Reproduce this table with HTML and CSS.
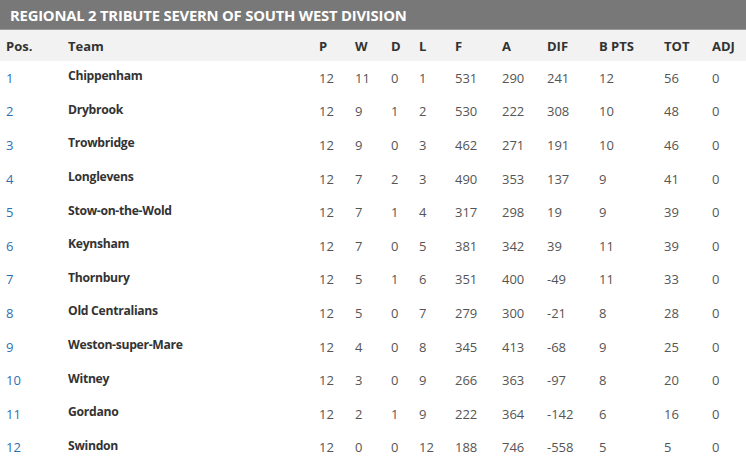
FILE: index.html
```html
<!DOCTYPE html>
<html>
<head>
<meta charset="utf-8">
<link rel="stylesheet" href="styles.css">
</head>
<body>
<div class="league">
  <div class="title">REGIONAL 2 TRIBUTE SEVERN OF SOUTH WEST DIVISION</div>
  <table class="standings">
    <colgroup>
      <col class="c-pos"><col class="c-team"><col class="c-p"><col class="c-w"><col class="c-d"><col class="c-l"><col class="c-f"><col class="c-a"><col class="c-dif"><col class="c-b"><col class="c-tot"><col class="c-adj">
    </colgroup>
    <thead>
      <tr><th>Pos.</th><th>Team</th><th>P</th><th>W</th><th>D</th><th>L</th><th>F</th><th>A</th><th>DIF</th><th>B PTS</th><th>TOT</th><th>ADJ</th></tr>
    </thead>
    <tbody>
      <tr><td class="pos">1</td><td class="team">Chippenham</td><td>12</td><td>11</td><td>0</td><td>1</td><td>531</td><td>290</td><td>241</td><td>12</td><td>56</td><td>0</td></tr>
      <tr><td class="pos">2</td><td class="team">Drybrook</td><td>12</td><td>9</td><td>1</td><td>2</td><td>530</td><td>222</td><td>308</td><td>10</td><td>48</td><td>0</td></tr>
      <tr><td class="pos">3</td><td class="team">Trowbridge</td><td>12</td><td>9</td><td>0</td><td>3</td><td>462</td><td>271</td><td>191</td><td>10</td><td>46</td><td>0</td></tr>
      <tr><td class="pos">4</td><td class="team">Longlevens</td><td>12</td><td>7</td><td>2</td><td>3</td><td>490</td><td>353</td><td>137</td><td>9</td><td>41</td><td>0</td></tr>
      <tr><td class="pos">5</td><td class="team">Stow-on-the-Wold</td><td>12</td><td>7</td><td>1</td><td>4</td><td>317</td><td>298</td><td>19</td><td>9</td><td>39</td><td>0</td></tr>
      <tr><td class="pos">6</td><td class="team">Keynsham</td><td>12</td><td>7</td><td>0</td><td>5</td><td>381</td><td>342</td><td>39</td><td>11</td><td>39</td><td>0</td></tr>
      <tr><td class="pos">7</td><td class="team">Thornbury</td><td>12</td><td>5</td><td>1</td><td>6</td><td>351</td><td>400</td><td>-49</td><td>11</td><td>33</td><td>0</td></tr>
      <tr><td class="pos">8</td><td class="team">Old Centralians</td><td>12</td><td>5</td><td>0</td><td>7</td><td>279</td><td>300</td><td>-21</td><td>8</td><td>28</td><td>0</td></tr>
      <tr><td class="pos">9</td><td class="team">Weston-super-Mare</td><td>12</td><td>4</td><td>0</td><td>8</td><td>345</td><td>413</td><td>-68</td><td>9</td><td>25</td><td>0</td></tr>
      <tr><td class="pos">10</td><td class="team">Witney</td><td>12</td><td>3</td><td>0</td><td>9</td><td>266</td><td>363</td><td>-97</td><td>8</td><td>20</td><td>0</td></tr>
      <tr><td class="pos">11</td><td class="team">Gordano</td><td>12</td><td>2</td><td>1</td><td>9</td><td>222</td><td>364</td><td>-142</td><td>6</td><td>16</td><td>0</td></tr>
      <tr><td class="pos">12</td><td class="team">Swindon</td><td>12</td><td>0</td><td>0</td><td>12</td><td>188</td><td>746</td><td>-558</td><td>5</td><td>5</td><td>0</td></tr>
    </tbody>
  </table>
</div>
</body>
</html>
```
FILE: styles.css
```css
html, body {
  margin: 0;
  padding: 0;
  background: #ffffff;
}
body {
  font-family: "Open Sans", "Noto Sans", sans-serif;
  color: #444;
}
.league {
  width: 746px;
}
.title {
  height: 30px;
  line-height: 30px;
  background: #787878;
  color: #ffffff;
  font-weight: 700;
  font-size: 14.8px;
  padding-left: 10px;
  letter-spacing: -0.2px;
  border-bottom: 1px solid #9a9a9a;
  box-sizing: border-box;
}
.standings {
  width: 746px;
  border-collapse: collapse;
  table-layout: fixed;
}
.c-pos { width: 62px; }
.c-team { width: 251px; }
.c-p { width: 36px; }
.c-w { width: 36px; }
.c-d { width: 28px; }
.c-l { width: 36px; }
.c-f { width: 47px; }
.c-a { width: 45px; }
.c-dif { width: 52px; }
.c-b { width: 65px; }
.c-tot { width: 48px; }
.c-adj { width: 40px; }
.standings thead tr {
  height: 31px;
}
.standings th {
  background: #f2f2f2;
  padding: 0 0 0 6px;
  text-align: left;
  font-size: 13px;
  font-weight: 700;
  color: #333;
}
.standings tbody tr {
  height: 33.6px;
}
.standings td {
  padding: 0 0 0 6px;
  line-height: 18px;
  text-align: left;
  font-size: 13px;
  color: #555;
}
.standings td.pos {
  color: #2f6fb3;
}
.standings td.team {
  font-weight: 700;
  font-size: 12.2px;
  letter-spacing: -0.3px;
  color: #333;
  padding-bottom: 3px;
}
```
